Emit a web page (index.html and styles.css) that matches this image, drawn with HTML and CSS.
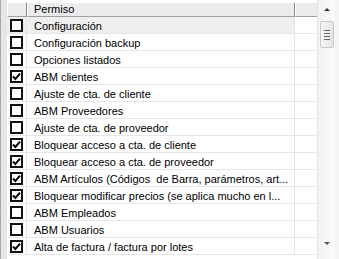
FILE: index.html
```html
<!DOCTYPE html>
<html>
<head>
<meta charset="utf-8">
<link rel="stylesheet" href="styles.css">
</head>
<body>
<div class="frame">
  <div class="edge"></div>
  <div class="grid">
    <div class="head row">
      <div class="hc c0"></div>
      <div class="hc c1">Permiso</div>
      <div class="hc c2"></div>
    </div>
    <div class="row cur"><div class="cell c0"><span class="cb"></span></div><div class="cell c1">Configuración</div><div class="cell c2"></div></div>
    <div class="row"><div class="cell c0"><span class="cb"></span></div><div class="cell c1">Configuración backup</div><div class="cell c2"></div></div>
    <div class="row"><div class="cell c0"><span class="cb"></span></div><div class="cell c1">Opciones listados</div><div class="cell c2"></div></div>
    <div class="row"><div class="cell c0"><span class="cb on"><svg viewBox="0 0 9 9" width="9" height="9"><path d="M1 4.5 L3.4 7 L8 1.6" fill="none" stroke="#000" stroke-width="2"/></svg></span></div><div class="cell c1">ABM clientes</div><div class="cell c2"></div></div>
    <div class="row"><div class="cell c0"><span class="cb"></span></div><div class="cell c1">Ajuste de cta. de cliente</div><div class="cell c2"></div></div>
    <div class="row"><div class="cell c0"><span class="cb"></span></div><div class="cell c1">ABM Proveedores</div><div class="cell c2"></div></div>
    <div class="row"><div class="cell c0"><span class="cb"></span></div><div class="cell c1">Ajuste de cta. de proveedor</div><div class="cell c2"></div></div>
    <div class="row"><div class="cell c0"><span class="cb on"><svg viewBox="0 0 9 9" width="9" height="9"><path d="M1 4.5 L3.4 7 L8 1.6" fill="none" stroke="#000" stroke-width="2"/></svg></span></div><div class="cell c1">Bloquear acceso a cta. de cliente</div><div class="cell c2"></div></div>
    <div class="row"><div class="cell c0"><span class="cb on"><svg viewBox="0 0 9 9" width="9" height="9"><path d="M1 4.5 L3.4 7 L8 1.6" fill="none" stroke="#000" stroke-width="2"/></svg></span></div><div class="cell c1">Bloquear acceso a cta. de proveedor</div><div class="cell c2"></div></div>
    <div class="row"><div class="cell c0"><span class="cb on"><svg viewBox="0 0 9 9" width="9" height="9"><path d="M1 4.5 L3.4 7 L8 1.6" fill="none" stroke="#000" stroke-width="2"/></svg></span></div><div class="cell c1">ABM Artículos (Códigos  de Barra, parámetros, art...</div><div class="cell c2"></div></div>
    <div class="row"><div class="cell c0"><span class="cb on"><svg viewBox="0 0 9 9" width="9" height="9"><path d="M1 4.5 L3.4 7 L8 1.6" fill="none" stroke="#000" stroke-width="2"/></svg></span></div><div class="cell c1">Bloquear modificar precios (se aplica mucho en l...</div><div class="cell c2"></div></div>
    <div class="row"><div class="cell c0"><span class="cb"></span></div><div class="cell c1">ABM Empleados</div><div class="cell c2"></div></div>
    <div class="row"><div class="cell c0"><span class="cb"></span></div><div class="cell c1">ABM Usuarios</div><div class="cell c2"></div></div>
    <div class="row"><div class="cell c0"><span class="cb on"><svg viewBox="0 0 9 9" width="9" height="9"><path d="M1 4.5 L3.4 7 L8 1.6" fill="none" stroke="#000" stroke-width="2"/></svg></span></div><div class="cell c1">Alta de factura / factura por lotes</div><div class="cell c2"></div></div>
  </div>
  <div class="sbar">
    <div class="arrow up"></div>
    <div class="thumb"><span></span><span></span><span></span><span></span></div>
    <div class="track"></div>
    <div class="arrow down"></div>
  </div>
  <div class="redge"></div>
</div>
</body>
</html>
```
FILE: styles.css
```css
html, body {
  margin: 0;
  padding: 0;
  background: #ececec;
}
.frame {
  width: 339px;
  height: 259px;
  display: flex;
  font-family: "Liberation Sans", Arial, sans-serif;
  font-size: 11px;
  color: #000;
  overflow: hidden;
}
.edge {
  width: 6px;
  border-left: 1px solid #a8a8a8;
  background: #e6e6e6;
}
.grid {
  width: 310px;
  padding-top: 2px;
  background: #fff;
  display: flex;
  flex-direction: column;
}
.row {
  display: grid;
  grid-template-columns: 20px 268px 22px;
  height: 17px;
  flex: none;
}
.head {
  height: 15px;
  background: #ececec;
}
.hc {
  box-sizing: border-box;
  border-top: 1px solid #fff;
  border-left: 1px solid #fff;
  border-right: 1px solid #8a8a8a;
  border-bottom: 1px solid #a0a0a0;
  line-height: 13px;
  padding-left: 6px;
  white-space: pre;
}
.hc.c2 { border-right: none; }
.cell {
  box-sizing: border-box;
  border-bottom: 1px solid #e6e6e6;
  border-right: 1px solid #e6e6e6;
  line-height: 15px;
  padding-top: 2px;
  white-space: pre;
  overflow: hidden;
}
.cell.c1 { padding-left: 7px; }
.cell.c2 { border-right: none; }
.cur .c0, .cur .c1 { background: #efefef; }
.cell.c0 {
  display: flex;
  align-items: center;
  justify-content: center;
  padding-top: 1px;
}
.cb {
  box-sizing: border-box;
  width: 13px;
  height: 13px;
  border: 2px solid #111;
  background: #fff;
  display: flex;
  align-items: center;
  justify-content: center;
}
.cb svg { display: block; }
.sbar {
  width: 18px;
  background: linear-gradient(to right, #f2f2f2, #fbfbfb);
  display: flex;
  flex-direction: column;
  align-items: center;
  border-left: 1px solid #e4e4e4;
  box-sizing: border-box;
}
.arrow {
  width: 0;
  height: 0;
  border-left: 3px solid transparent;
  border-right: 3px solid transparent;
}
.up {
  margin-top: 8px;
  border-bottom: 3px solid #333;
}
.down {
  margin-bottom: 14px;
  border-top: 3px solid #555;
}
.thumb {
  margin-top: 10px;
  width: 14px;
  height: 27px;
  box-sizing: border-box;
  border: 1px solid #c8c8c8;
  border-radius: 2px;
  background: linear-gradient(to right, #f6f6f6, #e4e4e4);
  display: flex;
  flex-direction: column;
  align-items: center;
  justify-content: center;
  gap: 2px;
}
.thumb span {
  width: 6px;
  height: 1px;
  background: #666;
}
.track { flex: 1; }
.redge {
  width: 4px;
  background: #f4f4f4;
}
```
